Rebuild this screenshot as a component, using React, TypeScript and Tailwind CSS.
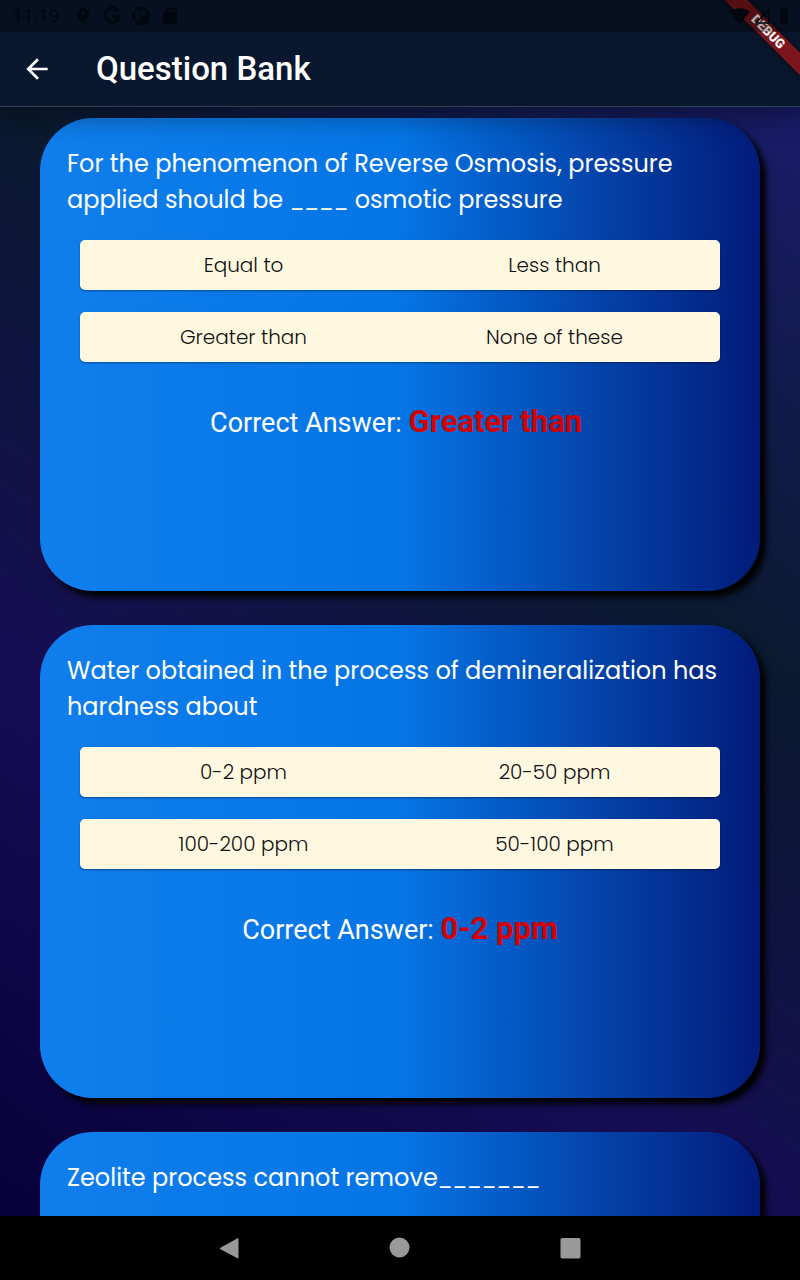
import { MdArrowBack, MdBatteryFull, MdLocationOn, MdSdCard } from "react-icons/md";

type Question = {
  text: string;
  options: string[];
  answer: string;
};

const questions: Question[] = [
  {
    text: "For the phenomenon of Reverse Osmosis, pressure applied should be ____ osmotic pressure",
    options: ["Equal to", "Less than", "Greater than", "None of these"],
    answer: "Greater than\u00a0",
  },
  {
    text: "Water obtained in the process of demineralization has hardness about",
    options: ["0-2 ppm", "20-50 ppm", "100-200 ppm", "50-100 ppm"],
    answer: "0-2 ppm",
  },
  {
    text: "Zeolite process cannot remove_______",
    options: [],
    answer: "",
  },
];

function StatusBar() {
  return (
    <div className="relative z-20 flex h-8 items-center justify-between bg-black/30 pl-3 pr-1.5 text-[#02070f]">
      <div className="flex items-center gap-[9px]">
        <span className="mr-[5px] text-[19px] leading-8">11:19</span>
        <MdLocationOn size={20} />
        <svg width="20" height="20" viewBox="0 0 20 20" fill="none" stroke="currentColor" strokeWidth="3.2">
          <path d="M15.8 5A7 7 0 1 0 16.9 10.8H10.2" />
        </svg>
        <svg width="20" height="20" viewBox="0 0 20 20">
          <path
            fill="currentColor"
            fillRule="evenodd"
            d="M10 1a9 9 0 1 0 0 18a9 9 0 0 0 0-18ZM6 5H7.6A1.2 1.2 0 0 1 8.8 6.2V14.4A1.2 1.2 0 0 1 7.6 15.6H6.4A1.2 1.2 0 0 1 5.2 15L4.2 13V6.2A1.2 1.2 0 0 1 5.4 5ZM11.4 5H13.6A1.5 1.5 0 0 1 15.1 6.5V8.2A1.5 1.5 0 0 1 13.6 9.7H11.4A1.2 1.2 0 0 1 10.2 8.5V6.2A1.2 1.2 0 0 1 11.4 5Z"
          />
        </svg>
        <MdSdCard size={20} />
      </div>
      <div className="flex items-center gap-0.5">
        <svg width="20" height="18" viewBox="0 0 20 18" fill="currentColor">
          <path d="M0 4.5C6 .2 14 .2 20 4.5L10 17Z" />
        </svg>
        <svg width="20" height="18" viewBox="0 0 20 18" fill="none" stroke="currentColor" strokeWidth="1.6">
          <path d="M17 2V16H4Z" />
        </svg>
        <MdBatteryFull size={20} />
      </div>
    </div>
  );
}

function DebugRibbon() {
  return (
    <div className="pointer-events-none absolute right-0 top-0 z-10 h-24 w-24 overflow-hidden">
      <div className="absolute -right-8 top-6 w-32 rotate-45 bg-[#7a161c] text-center text-[13px] font-black leading-4 text-white shadow-[0_0_8px_rgba(0,0,0,0.5)]">
        DEBUG
      </div>
    </div>
  );
}

function QuestionText({ text }: { text: string }) {
  return (
    <h2 className="font-[Poppins,Inter,sans-serif] text-2xl font-normal leading-9 text-white">
      {text.split(/(_+)/).map((part, index) =>
        part.startsWith("_") ? (
          <span key={index} className="text-xl leading-none">
            {part}
          </span>
        ) : (
          part
        ),
      )}
    </h2>
  );
}

function QuestionCard({ question }: { question: Question }) {
  return (
    <article className="min-h-[473px] shrink-0 rounded-[53px] bg-[linear-gradient(90deg,#107eec_0%,#0575e6_50%,#021b79_100%)] px-[27px] pt-7 shadow-[6px_6px_6px_#000]">
      <QuestionText text={question.text} />
      {question.options.length > 0 && (
        <>
          <ul className="mx-[13px] mt-[22px] grid grid-cols-1 gap-[22px]">
            {[0, 2].map((start) => (
              <li
                key={start}
                className="grid h-[50px] grid-cols-2 items-center rounded-[5px] bg-[#fff8e1] pl-2 pr-2.5 text-center font-[Poppins,Inter,sans-serif] text-xl font-light text-[#111] shadow-[0_1px_2px_rgba(0,0,0,0.4)]"
              >
                <span>{question.options[start]}</span>
                <span>{question.options[start + 1]}</span>
              </li>
            ))}
          </ul>
          <p className="mt-10 text-center text-[27px] leading-10 text-white">
            Correct Answer: <strong className="text-[31px] font-bold text-[#d50000]">{question.answer}</strong>
          </p>
        </>
      )}
    </article>
  );
}

function NavigationBar() {
  return (
    <nav className="flex h-16 shrink-0 items-center justify-center gap-[149px] bg-black text-[#999]">
      <button type="button" aria-label="Back">
        <svg width="22" height="22" viewBox="0 0 22 22" fill="currentColor" stroke="currentColor" strokeLinejoin="round">
          <path d="M2 11.5L20 1.5V21Z" />
        </svg>
      </button>
      <button type="button" aria-label="Home">
        <svg width="22" height="22" viewBox="0 0 22 22" fill="currentColor">
          <circle cx="10.5" cy="10.5" r="10" />
        </svg>
      </button>
      <button type="button" aria-label="Recent apps">
        <svg width="22" height="22" viewBox="0 0 22 22" fill="currentColor">
          <rect x="0.5" y="1" width="20" height="20.5" rx="1.8" />
        </svg>
      </button>
    </nav>
  );
}

export default function App() {
  return (
    <div className="flex h-screen flex-col overflow-hidden bg-black font-[Roboto,sans-serif]">
      <header className="relative z-10 shrink-0 border-b border-[#354050] bg-[#0a182f] shadow-[0_4px_24px_8px_rgba(0,0,0,0.32)] [clip-path:inset(0_0_-48px_0)]">
        <DebugRibbon />
        <StatusBar />
        <div className="flex h-[74px] items-center gap-[43px] pl-[21px]">
          <button type="button" aria-label="Back" className="text-white">
            <MdArrowBack size={32} />
          </button>
          <h1 className="text-[33px] font-medium leading-[42px] text-white">Question Bank</h1>
        </div>
      </header>
      <main className="flex min-h-0 flex-1 flex-col gap-[34px] overflow-y-auto bg-[linear-gradient(36deg,#07003a_0%,#160d54_33%,#0a1a2f_66%,#191c6a_100%)] px-10 pt-[11px] [scrollbar-width:none]">
        {questions.map((question) => (
          <QuestionCard key={question.text} question={question} />
        ))}
      </main>
      <NavigationBar />
    </div>
  );
}
